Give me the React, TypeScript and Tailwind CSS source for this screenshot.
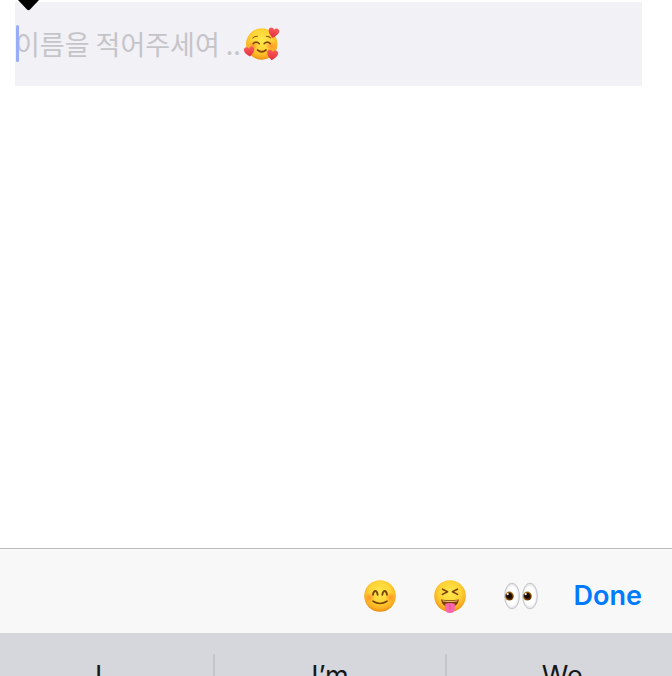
import React from "react";

const HEART = "M0 5.5C-3 3.2-5.6.7-5.6-2C-5.6-5.4-1.6-6.2 0-3.2C1.6-6.2 5.6-5.4 5.6-2C5.6.7 3 3.2 0 5.5Z";

function FaceGradient({ id }: { id: string }) {
  return (
    <defs>
      <radialGradient id={id} cx="50%" cy="38%" r="62%">
        <stop offset="0" stopColor="#ffe94f" />
        <stop offset="0.55" stopColor="#ffd335" />
        <stop offset="0.85" stopColor="#f9ad21" />
        <stop offset="1" stopColor="#ea8d12" />
      </radialGradient>
      <radialGradient id={id + "-blush"}>
        <stop offset="0" stopColor="#ff7426" stopOpacity="0.65" />
        <stop offset="1" stopColor="#ff7426" stopOpacity="0" />
      </radialGradient>
      <linearGradient id={id + "-heart"} x1="0" y1="0" x2="0" y2="1">
        <stop offset="0" stopColor="#fb5a5c" />
        <stop offset="1" stopColor="#e0303b" />
      </linearGradient>
    </defs>
  );
}

function LovingFace() {
  return (
    <svg viewBox="0 0 36 36" className="h-9 w-9 shrink-0" aria-hidden="true">
      <FaceGradient id="loving" />
      <circle cx="17.7" cy="18" r="15.7" fill="url(#loving)" />
      <circle cx="9" cy="20" r="5.5" fill="url(#loving-blush)" />
      <circle cx="27" cy="20" r="5.5" fill="url(#loving-blush)" />
      <g fill="none" stroke="#85470b" strokeLinecap="round">
        <path d="M9.2 17.6Q12.2 14.6 15.2 17.6M20.2 17.6Q23.2 14.6 26.2 17.6" strokeWidth="1.6" />
        <path d="M8.8 12Q10.5 10 13.4 10.2M22.4 10.2Q25.3 10.3 26.8 12" strokeWidth="1.1" />
        <path d="M13.6 24Q17.8 27.6 22 24" strokeWidth="1.9" />
      </g>
      <g fill="url(#loving-heart)">
        <path d={HEART} transform="translate(29.6 6.8) rotate(10) scale(.95)" />
        <path d={HEART} transform="translate(5.3 25.6) rotate(-8) scale(.92)" />
        <path d={HEART} transform="translate(28.4 29) rotate(8) scale(.98)" />
      </g>
    </svg>
  );
}

function SmilingFace() {
  return (
    <svg viewBox="0 0 32 32" className="h-8 w-8" aria-hidden="true">
      <FaceGradient id="smiling" />
      <circle cx="16" cy="16" r="15.8" fill="url(#smiling)" />
      <circle cx="5.6" cy="17.5" r="5" fill="url(#smiling-blush)" />
      <circle cx="26.4" cy="17.5" r="5" fill="url(#smiling-blush)" />
      <g fill="none" stroke="#7a4307" strokeLinecap="round">
        <path d="M9 14.8Q9.5 11 11.3 11Q13.1 11 13.7 14.8M18.3 14.8Q18.9 11 20.7 11Q22.5 11 23 14.8" strokeWidth="1.8" />
        <path d="M9 21.2Q16 25.8 23 21.2" strokeWidth="1.7" />
      </g>
    </svg>
  );
}

function TongueFace() {
  return (
    <svg viewBox="0 0 32 32" className="h-8 w-8 overflow-visible" aria-hidden="true">
      <FaceGradient id="tongue" />
      <circle cx="16" cy="16" r="15.8" fill="url(#tongue)" />
      <path
        d="M8.6 9.2L13.6 11.8L8.4 14.4M23.4 9.2L18.4 11.8L23.6 14.4"
        fill="none"
        stroke="#7a4307"
        strokeWidth="1.6"
        strokeLinecap="round"
        strokeLinejoin="round"
      />
      <path d="M7 19.4Q16 21 25 19.4Q23.8 27 16 27Q8.2 27 7 19.4Z" fill="#7a3d08" />
      <path d="M8.4 20.3Q16 21.7 23.6 20.3L23.2 21.4Q16 22.6 8.8 21.4Z" fill="#e8b765" />
      <path d="M11.2 23.8Q16 22.4 20.8 23.8V28.5Q20.8 33 16 33Q11.2 33 11.2 28.5Z" fill="#fa65ad" />
      <path d="M16 24.8V28.8" stroke="#e54c98" strokeWidth="1" strokeLinecap="round" />
    </svg>
  );
}

function Eyes() {
  return (
    <svg viewBox="0 0 34 28" className="h-7 w-[34px]" aria-hidden="true">
      <defs>
        <radialGradient id="eye-white">
          <stop offset="0.7" stopColor="#ffffff" />
          <stop offset="1" stopColor="#dcdce0" />
        </radialGradient>
        <radialGradient id="iris" cx="60%" cy="62%">
          <stop offset="0" stopColor="#251000" />
          <stop offset="0.5" stopColor="#5a2e04" />
          <stop offset="1" stopColor="#a66a0d" />
        </radialGradient>
      </defs>
      {[0, 18].map((x) => (
        <g key={x} transform={`translate(${x} 0)`}>
          <ellipse cx="8" cy="14" rx="7.4" ry="12.9" fill="url(#eye-white)" stroke="#c4c4c8" strokeWidth="0.9" />
          <ellipse cx="5.4" cy="14.1" rx="4.4" ry="4.5" fill="url(#iris)" />
          <circle cx="5" cy="13.7" r="2.9" fill="#180a02" />
          <circle cx="3.7" cy="12.1" r="1.1" fill="#ffffff" />
        </g>
      ))}
    </svg>
  );
}

const suggestions = ["I", "I’m", "We"];

export default function App() {
  return (
    <div className="flex min-h-screen flex-col overflow-hidden bg-white font-['Inter','Noto_Sans_CJK_KR',sans-serif]">
      <main className="flex-1 pt-0.5 pr-[30px] pl-[15px]">
        <div className="relative flex h-[84px] items-center bg-[#f2f1f6]">
          <svg viewBox="0 0 24 12" className="absolute -top-0.5 left-[2px] h-3 w-6" aria-hidden="true">
            <path d="M1 0H22L13 9.5Q11.5 11 10 9.5Z" fill="#000000" />
          </svg>
          <input
            type="text"
            aria-label="이름"
            placeholder="이름을 적어주세여 .."
            className="w-[229px] bg-transparent font-['Noto_Sans_CJK_KR',sans-serif] text-[27px] leading-10 text-black outline-none placeholder:text-[#c5c4c9]"
          />
          <span className="absolute top-[23px] left-px h-[37px] w-[3px] rounded-sm bg-[#98acf8]" />
          <LovingFace />
        </div>
      </main>
      <div className="flex h-[85px] items-center justify-end gap-[38px] border-t border-[#bcbcbe] bg-[#f8f8f8] pt-2.5 pr-[30px]">
        <button type="button" aria-label="Smiling face">
          <SmilingFace />
        </button>
        <button type="button" aria-label="Squinting face with tongue">
          <TongueFace />
        </button>
        <button type="button" aria-label="Eyes">
          <Eyes />
        </button>
        <button type="button" className="-ml-0.5 text-[27px] leading-9 font-semibold text-[#007aff]">
          Done
        </button>
      </div>
      <div className="h-[43px] overflow-hidden bg-[#d6d7dc] pt-[21px]">
        <div className="-mr-1.5 -ml-4 grid grid-cols-3 divide-x-2 divide-[#c4c5ca]">
          {suggestions.map((word) => (
            <button key={word} type="button" className="pt-1 text-[27px] leading-9 text-[#161618]">
              {word}
            </button>
          ))}
        </div>
      </div>
    </div>
  );
}
